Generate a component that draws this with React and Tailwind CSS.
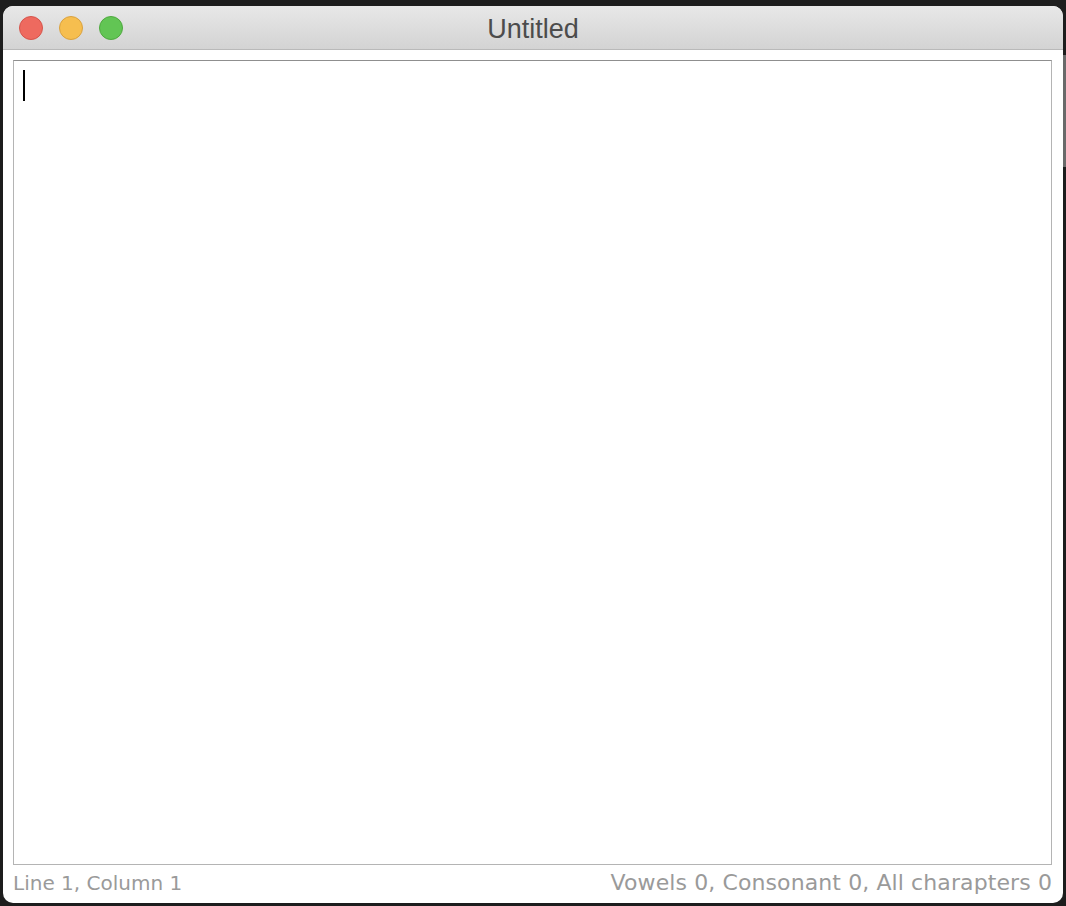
export default function App() {
  return (
    <div className="relative w-[1066px] h-[906px] bg-[#1d1d1d] overflow-hidden">
      <div className="absolute right-0 top-[55px] w-[3px] h-[112px] bg-[#6a6a6a]" />
      <div className="absolute left-[3px] top-[6px] w-[1060px] h-[897px] bg-white rounded-[10px] overflow-hidden flex flex-col">
        <div className="relative h-[44px] shrink-0 bg-gradient-to-b from-[#e8e8e8] to-[#d3d3d3] border-b border-[#b9b9b9] flex items-center">
          <div className="flex items-center gap-[16px] pl-[16px]">
            <div className="w-[24px] h-[24px] rounded-full bg-[#ee6a5f] border border-[#d5544b]" />
            <div className="w-[24px] h-[24px] rounded-full bg-[#f6be4f] border border-[#d9a13f]" />
            <div className="w-[24px] h-[24px] rounded-full bg-[#62c554] border border-[#4fa83f]" />
          </div>
          <div
            className="absolute inset-0 flex items-center justify-center text-[27px] text-[#4c4c4c] leading-none pt-[3px]"
            style={{ fontFamily: '"Liberation Sans", Arial, sans-serif' }}
          >
            Untitled
          </div>
        </div>
        <div className="flex-1 flex flex-col px-[10px] pt-[10px] pr-[11px]">
          <div className="h-[805px] border border-[#b4b4b4] border-t-[#8f8f8f] pl-[9px] pt-[9px]">
            <div className="w-[2px] h-[31px] bg-black" />
          </div>
          <div
            className="flex justify-between items-baseline text-[#9a9a9a] leading-none pt-[7px]"
            style={{ fontFamily: '"DejaVu Sans", Verdana, sans-serif' }}
          >
            <span className="text-[20px]">Line 1, Column 1</span>
            <span className="text-[22px] tracking-[0.1px]">
              Vowels 0, Consonant 0, All charapters 0
            </span>
          </div>
        </div>
      </div>
    </div>
  );
}
